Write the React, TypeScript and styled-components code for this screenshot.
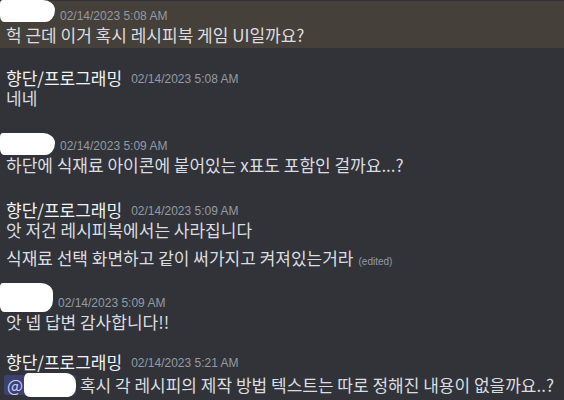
import React from 'react';
import styled, { createGlobalStyle } from 'styled-components';

const GlobalStyle = createGlobalStyle`
  html, body {
    margin: 0;
    padding: 0;
    background: #313338;
  }
  body {
    width: 564px;
    height: 400px;
    overflow: hidden;
  }
`;

const Chat = styled.main`
  width: 564px;
  height: 400px;
  padding-top: 1px;
  box-sizing: border-box;
  background: #313338;
  display: flex;
  flex-direction: column;
  overflow: hidden;
`;

const Group = styled.section<{ $highlight?: boolean; $space: number }>`
  margin-top: ${(p) => p.$space}px;
  padding: ${(p) => (p.$highlight ? '4px 0 3px 6px' : '0 0 0 6px')};
  background: ${(p) => (p.$highlight ? '#45403a' : 'transparent')};
`;

const Header = styled.div`
  display: flex;
  align-items: center;
  gap: 5px;
  height: 20px;
  line-height: 20px;
`;

const Name = styled.span`
  margin-right: 4px;
  font-family: 'Noto Sans CJK KR', 'Noto Sans', sans-serif;
  font-size: 17px;
  font-weight: 400;
  color: #f2f3f5;
`;

const Redacted = styled.span<{ $w: number; $h: number; $top: number }>`
  display: inline-block;
  flex: none;
  align-self: flex-start;
  width: ${(p) => p.$w}px;
  height: ${(p) => p.$h}px;
  margin-left: -6px;
  margin-top: ${(p) => p.$top}px;
  background: #ffffff;
  border-radius: 3px 12px 10px 4px / 4px 10px 12px 6px;
`;

const Time = styled.time`
  font-family: 'Liberation Sans', Arial, sans-serif;
  font-size: 12px;
  color: #949ba4;
  padding-top: 2px;
`;

const Message = styled.div<{ $gap?: number }>`
  margin-top: ${(p) => p.$gap ?? 0}px;
  font-family: 'Noto Sans CJK KR', 'Noto Sans', sans-serif;
  font-size: 17px;
  line-height: 20px;
  height: 20px;
  color: #dbdee1;
  white-space: nowrap;
`;

const Edited = styled.span`
  margin-left: 5px;
  font-family: 'Liberation Sans', Arial, sans-serif;
  font-size: 10px;
  color: #949ba4;
`;

const Mention = styled.span`
  display: inline-block;
  margin-left: -2px;
  padding: 0 0 0 3px;
  height: 20px;
  line-height: 20px;
  border-radius: 3px;
  background: rgba(88, 101, 242, 0.3);
  color: #c9cdfb;
  vertical-align: bottom;
  margin-top: 3px;
`;

const MentionBlob = styled.span`
  display: inline-block;
  width: 52px;
  height: 24px;
  margin-left: 1px;
  vertical-align: top;
  margin-top: -2px;
  background: #ffffff;
  border-radius: 4px 10px 8px 6px / 6px 10px 10px 6px;
`;

type Msg = { text: React.ReactNode; edited?: boolean };

type Post = {
  name?: string;
  blob?: { w: number; h: number; top: number };
  time: string;
  highlight?: boolean;
  space: number;
  messages: Msg[];
};

const posts: Post[] = [
  {
    blob: { w: 55, h: 22, top: -5 },
    time: '02/14/2023 5:08 AM',
    highlight: true,
    space: 0,
    messages: [{ text: '헉 근데 이거 혹시 레시피북 게임 UI일까요?' }],
  },
  {
    name: '향단/프로그래밍',
    time: '02/14/2023 5:08 AM',
    space: 20,
    messages: [{ text: '네네' }],
  },
  {
    blob: { w: 55, h: 22, top: -2 },
    time: '02/14/2023 5:09 AM',
    space: 27,
    messages: [{ text: '하단에 식재료 아이콘에 붙어있는 x표도 포함인 걸까요...?' }],
  },
  {
    name: '향단/프로그래밍',
    time: '02/14/2023 5:09 AM',
    space: 25,
    messages: [
      { text: '앗 저건 레시피북에서는 사라집니다' },
      { text: '식재료 선택 화면하고 같이 써가지고 켜져있는거라', edited: true },
    ],
  },
  {
    blob: { w: 53, h: 29, top: -9 },
    time: '02/14/2023 5:09 AM',
    space: 24,
    messages: [{ text: '앗 넵 답변 감사합니다!!' }],
  },
  {
    name: '향단/프로그래밍',
    time: '02/14/2023 5:21 AM',
    space: 20,
    messages: [
      {
        text: (
          <>
            <Mention>
              @<MentionBlob />
            </Mention>{' '}
            혹시 각 레시피의 제작 방법 텍스트는 따로 정해진 내용이 없을까요..?
          </>
        ),
      },
    ],
  },
];

export default function App() {
  return (
    <>
      <GlobalStyle />
      <Chat>
        {posts.map((post, i) => (
          <Group key={i} $highlight={post.highlight} $space={post.space}>
            <Header>
              {post.blob ? (
                <Redacted $w={post.blob.w} $h={post.blob.h} $top={post.blob.top} />
              ) : (
                <Name>{post.name}</Name>
              )}
              <Time>{post.time}</Time>
            </Header>
            {post.messages.map((m, j) => (
              <Message key={j} $gap={j > 0 ? 8 : 0}>
                {m.text}
                {m.edited && <Edited>(edited)</Edited>}
              </Message>
            ))}
          </Group>
        ))}
      </Chat>
    </>
  );
}
